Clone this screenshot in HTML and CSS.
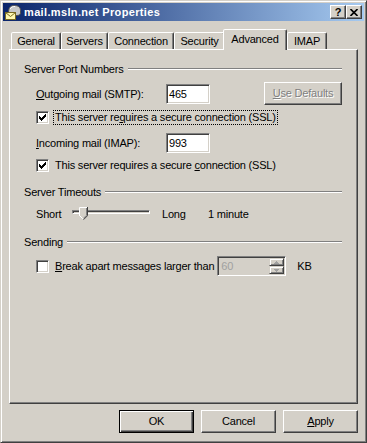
FILE: index.html
```html
<!DOCTYPE html>
<html>
<head>
<meta charset="utf-8">
<link rel="stylesheet" href="styles.css">
</head>
<body>
<div class="window">
  <div class="titlebar">
    <svg class="app-icon" width="16" height="16" viewBox="0 0 16 16">
      <path d="M3.5 8.5 C3.5 3 6 1.5 9.5 1.5 C13 1.5 15.5 3 15.5 6.5 L15.5 9 C15.5 10.5 14 11.5 12 11.5 L4.5 11.5 Z" fill="#c8c8c8" stroke="#505050"/>
      <path d="M5 5 C6 3 8 2.5 10 2.5" stroke="#ffffff" fill="none"/>
      <rect x="0.5" y="8.5" width="10" height="7" fill="#fff8b0" stroke="#7a6a20"/>
      <path d="M0.5 8.5 L5.5 12.5 L10.5 8.5" stroke="#7a6a20" fill="none"/>
    </svg>
    <span class="title">mail.msln.net Properties</span>
    <span class="tb-btn tb-help">?</span>
    <span class="tb-btn">
      <svg width="8" height="7" viewBox="0 0 8 7"><path d="M0.5 0 L7.5 7 M7.5 0 L0.5 7" stroke="#000" stroke-width="1.6"/></svg>
    </span>
  </div>

  <div class="content">
    <div class="tabs">
      <div class="tab t-general">General</div>
      <div class="tab t-servers">Servers</div>
      <div class="tab t-connection">Connection</div>
      <div class="tab t-security">Security</div>
      <div class="tab t-advanced selected">Advanced</div>
      <div class="tab t-imap">IMAP</div>
    </div>

    <div class="panel">
      <div class="group-head"><span>Server Port Numbers</span><span class="etch"></span></div>
      <div class="group">
        <div class="row r-out">
          <span class="field-label"><u>O</u>utgoing mail (SMTP):</span>
          <span class="field">465</span>
          <span class="btn btn-use disabled"><u>U</u>se Defaults</span>
        </div>
        <div class="row r-chk1">
          <span class="chk"><svg width="7" height="7" viewBox="0 0 7 7"><path d="M0 2h1v1h-1zM0 3h2v1h-2zM0 4h5v1h-5zM1 5h3v1h-3zM2 6h1v1h-1zM1 3h1v1h-1zM3 3h3v1h-3zM4 2h3v1h-3zM5 1h2v1h-2zM6 0h1v1h-1zM2 4h1v1h-1z" fill="#000"/></svg></span>
          <span class="chk-label focus">This server re<u>q</u>uires a secure connection (SSL)</span>
        </div>
        <div class="row r-in">
          <span class="field-label"><u>I</u>ncoming mail (IMAP):</span>
          <span class="field">993</span>
        </div>
        <div class="row r-chk2">
          <span class="chk"><svg width="7" height="7" viewBox="0 0 7 7"><path d="M0 2h1v1h-1zM0 3h2v1h-2zM0 4h5v1h-5zM1 5h3v1h-3zM2 6h1v1h-1zM1 3h1v1h-1zM3 3h3v1h-3zM4 2h3v1h-3zM5 1h2v1h-2zM6 0h1v1h-1zM2 4h1v1h-1z" fill="#000"/></svg></span>
          <span class="chk-label">This server requires a secure <u>c</u>onnection (SSL)</span>
        </div>
      </div>

      <div class="group-head gh-timeouts"><span>Server Timeouts</span><span class="etch"></span></div>
      <div class="group">
        <div class="row r-slider">
          <span class="sl-short">Short</span>
          <span class="track">
            <svg class="thumb" width="9" height="13" viewBox="0 0 9 13">
              <path d="M0 0 H9 V9 L4.5 13 L0 9 Z" fill="#D4D0C8"/>
              <path d="M0.5 9 V0.5 H8" stroke="#fff" fill="none"/>
              <path d="M0.5 8.5 L4.5 12.5" stroke="#fff" fill="none"/>
              <path d="M8.5 0 V8.7 L4.5 12.7" stroke="#404040" fill="none"/>
              <path d="M7.5 1 V8.3 L4.5 11.3" stroke="#808080" fill="none"/>
            </svg>
          </span>
          <span class="sl-long">Long</span>
          <span>1 minute</span>
        </div>
      </div>

      <div class="group-head gh-sending"><span>Sending</span><span class="etch"></span></div>
      <div class="group">
        <div class="row r-chk3">
          <span class="chk"></span>
          <span class="chk-label"><u>B</u>reak apart messages larger than</span>
          <span class="spin">
            <span class="spin-val">60</span>
            <span class="spin-btns">
              <span class="spin-btn"><svg width="5" height="3" viewBox="0 0 5 3"><path d="M2 0h1v1h1v1h1v1h-5v-1h1v-1h1z" fill="#a0a0a0"/></svg></span>
              <span class="spin-btn"><svg width="5" height="3" viewBox="0 0 5 3"><path d="M0 0h5v1h-1v1h-1v1h-1v-1h-1v-1h-1z" fill="#a0a0a0"/></svg></span>
            </span>
          </span>
          <span class="kb">KB</span>
        </div>
      </div>
    </div>

    <div class="buttons">
      <span class="btn btn-default">OK</span>
      <span class="btn">Cancel</span>
      <span class="btn"><u>A</u>pply</span>
    </div>
  </div>
</div>
</body>
</html>
```

FILE: styles.css
```css
* { box-sizing: border-box; }

body {
  margin: 0;
  background: #D4D0C8;
  font-family: "Liberation Sans", Arial, sans-serif;
  font-size: 11px;
  line-height: 13px;
  letter-spacing: -0.2px;
  color: #000;
}

u { text-decoration: underline; text-underline-offset: 1px; }

.window {
  width: 367px;
  height: 443px;
  background: #D4D0C8;
  border: 1px solid;
  border-color: #D4D0C8 #404040 #404040 #D4D0C8;
  box-shadow: inset 1px 1px #fff, inset -1px -1px #808080;
  padding: 2px;
  display: flex;
  flex-direction: column;
}

.titlebar {
  height: 18px;
  flex: none;
  background: linear-gradient(to right, #0A246A, #A6CAF0);
  display: flex;
  align-items: center;
  padding: 0 2px;
}

.app-icon { flex: none; }

.title {
  flex: 1;
  margin-left: 3px;
  color: #fff;
  font-weight: bold;
  letter-spacing: 0.35px;
}

.tb-btn {
  width: 16px;
  height: 14px;
  flex: none;
  background: #D4D0C8;
  border: 1px solid;
  border-color: #fff #404040 #404040 #fff;
  box-shadow: inset -1px -1px #808080;
  display: flex;
  align-items: center;
  justify-content: center;
  font-weight: bold;
  font-size: 11px;
  line-height: 11px;
  letter-spacing: 0;
}

.content {
  flex: 1;
  padding: 8px 6px 0;
  display: flex;
  flex-direction: column;
}

/* tabs */
.tabs {
  display: flex;
  height: 20px;
  padding-left: 2px;
  position: relative;
  z-index: 1;
}

.tab {
  height: 17px;
  margin-top: 3px;
  border: 1px solid;
  border-bottom: none;
  border-color: #fff #404040 transparent #fff;
  box-shadow: inset -1px 0 #808080;
  border-radius: 2px 2px 0 0;
  background: #D4D0C8;
  text-align: center;
  padding-top: 2px;
  white-space: nowrap;
}

.t-general { width: 50px; }
.t-servers { width: 47px; }
.t-connection { width: 66px; }
.t-security { width: 51px; }
.t-advanced { width: 62px; }
.t-imap { width: 40px; }

.tab.selected {
  height: 21px;
  margin-top: 0;
  margin-left: -2px;
  width: 64px;
  padding-top: 3px;
}

/* panel */
.panel {
  height: 355px;
  flex: none;
  border: 1px solid;
  border-color: #fff #404040 #404040 #fff;
  box-shadow: inset -1px -1px #808080;
  padding: 13px 15px 0 14px;
}

.group-head {
  display: flex;
  align-items: flex-start;
  height: 13px;
}

.etch {
  flex: 1;
  height: 2px;
  margin-top: 5px;
  margin-left: 4px;
  border-top: 1px solid #808080;
  border-bottom: 1px solid #fff;
}

.gh-timeouts { margin-top: 13px; }
.gh-sending { margin-top: 15px; }

.group { padding-left: 12px; }

.row { display: flex; align-items: center; }

.r-out { height: 23px; margin-top: 6px; }
.r-chk1 { height: 15px; margin-top: 5px; }
.r-in { height: 20px; margin-top: 8px; }
.r-chk2 { height: 15px; margin-top: 5px; }
.r-slider { height: 14px; margin-top: 8px; align-items: flex-start; }
.r-chk3 { height: 20px; margin-top: 7px; }

.field-label { width: 130px; padding-top: 1px; }

.field {
  width: 44px;
  height: 20px;
  background: #fff;
  border: 1px solid;
  border-color: #808080 #fff #fff #808080;
  box-shadow: inset 1px 1px #404040, inset -1px -1px #D4D0C8;
  padding: 3px 0 0 2px;
}

.btn {
  width: 75px;
  height: 23px;
  flex: none;
  background: #D4D0C8;
  border: 1px solid;
  border-color: #fff #404040 #404040 #fff;
  box-shadow: inset -1px -1px #808080;
  display: flex;
  align-items: center;
  justify-content: center;
}

.btn-use { margin-left: 54px; width: 78px; }

.btn.disabled {
  color: #808080;
  text-shadow: 1px 1px #fff;
}

.btn-default {
  border-color: #000;
  box-shadow: inset 1px 1px #fff, inset -1px -1px #404040, inset -2px -2px #808080;
}

.chk {
  width: 13px;
  height: 13px;
  flex: none;
  background: #fff;
  border: 1px solid;
  border-color: #808080 #fff #fff #808080;
  box-shadow: inset 1px 1px #404040, inset -1px -1px #D4D0C8;
  display: flex;
  align-items: center;
  justify-content: center;
}

.chk svg { display: block; }

.chk-label {
  margin-left: 4px;
  padding: 0 1px;
  border: 1px dotted transparent;
  white-space: nowrap;
}

.chk-label.focus { border-color: #000; }

/* slider */
.sl-short { width: 36px; padding-top: 1px; }

.track {
  position: relative;
  width: 78px;
  height: 4px;
  margin-top: 3px;
  border: 1px solid;
  border-color: #808080 #fff #fff #808080;
  box-shadow: inset 1px 1px #404040;
}

.thumb {
  position: absolute;
  left: 6px;
  top: -4px;
  display: block;
}

.sl-long { width: 46px; margin-left: 12px; padding-top: 1px; }
.r-slider > span:last-child { padding-top: 1px; }

/* spin */
.spin {
  width: 69px;
  height: 20px;
  margin-left: 1px;
  flex: none;
  background: #D4D0C8;
  border: 1px solid;
  border-color: #808080 #fff #fff #808080;
  box-shadow: inset 1px 1px #404040, inset -1px -1px #D4D0C8;
  padding: 1px;
  display: flex;
}

.spin-val {
  flex: 1;
  color: #a0a0a0;
  padding: 2px 0 0 2px;
}

.spin-btns {
  width: 15px;
  display: flex;
  flex-direction: column;
}

.spin-btn {
  height: 8px;
  background: #D4D0C8;
  border: 1px solid;
  border-color: #D4D0C8 #404040 #404040 #D4D0C8;
  box-shadow: inset 1px 1px #fff, inset -1px -1px #808080;
  display: flex;
  align-items: center;
  justify-content: center;
}

.spin-btn svg { display: block; }

.kb { margin-left: 11px; }

/* dialog buttons */
.buttons {
  display: flex;
  justify-content: flex-end;
  gap: 7px;
  margin-top: 6px;
}
```
